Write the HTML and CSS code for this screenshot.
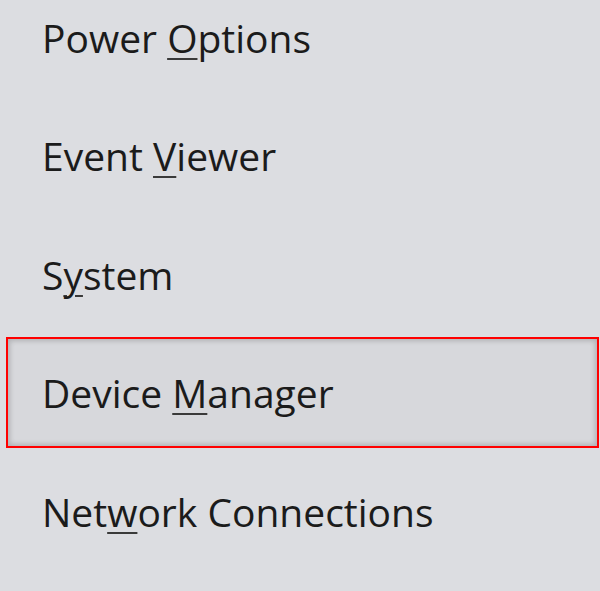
FILE: index.html
```html
<!DOCTYPE html>
<html lang="en">
<head>
<meta charset="UTF-8">
<meta name="viewport" content="width=device-width, initial-scale=1.0">
<title>Quick Link Menu</title>
<link rel="stylesheet" href="styles.css">
</head>
<body>
<div class="menu">
  <div class="menu-item"><span>Power <u class="key">O</u>ptions</span></div>
  <div class="menu-item"><span>Event <u class="key">V</u>iewer</span></div>
  <div class="menu-item"><span>S<u class="key">y</u>stem</span></div>
  <div class="menu-item selected"><span>Device <u class="key">M</u>anager</span></div>
  <div class="menu-item"><span>Net<u class="key">w</u>ork Connections</span></div>
</div>
</body>
</html>
```

FILE: styles.css
```css
body, html {
  margin: 0;
  padding: 0;
  height: 100%;
  overflow: hidden;
  background-color: #dcdde1;
  font-family: "Open Sans", "Noto Sans", sans-serif;
}
.menu {
  display: flex;
  flex-direction: column;
  gap: 7.5px;
  margin-top: -18.5px;
}
.menu-item {
  display: flex;
  align-items: center;
  height: 111px;
  box-sizing: border-box;
  margin: 0 1px 0 6px;
  padding-left: 34px;
  border: 2px solid transparent;
  font-size: 39px;
  color: #1b1b1b;
}
.menu-item span {
  margin-top: 0; /* capitals sit on the middle of the row */
}
.selected {
  border-color: #ff0000;
  background-color: #d7d8dc;
  box-shadow: inset 0 0 5px 2px rgba(0, 0, 0, 0.18);
}
.key {
  text-decoration-thickness: 2px;
  text-underline-offset: 5px;
  text-decoration-color: #3a3a3a;
}
```
